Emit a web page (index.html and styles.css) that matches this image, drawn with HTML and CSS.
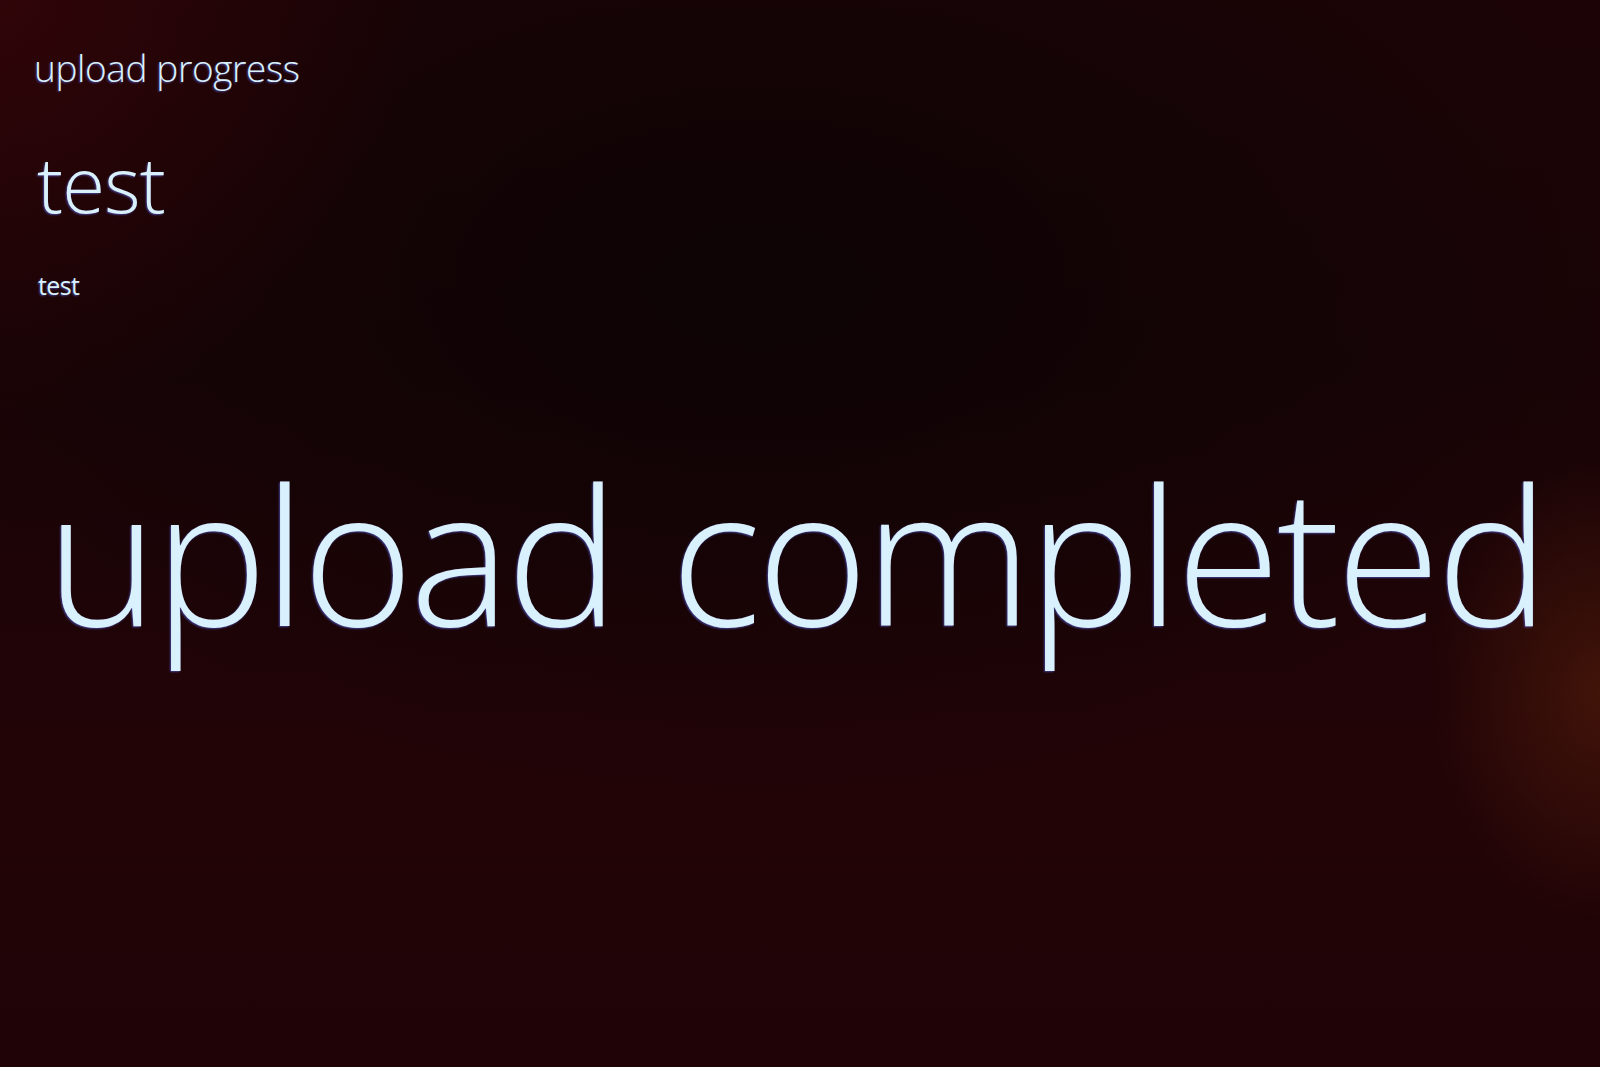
FILE: index.html
```html
<!DOCTYPE html>
<html lang="en">
<head>
<meta charset="utf-8">
<title>upload progress</title>
<link rel="stylesheet" href="styles.css">
</head>
<body>
<main class="screen">
  <header class="page-header">
    <p class="app-title">upload progress</p>
    <h1 class="page-title">test</h1>
    <p class="item-name">test</p>
  </header>
  <section class="status">
    <p class="status-text">upload completed</p>
  </section>
</main>
</body>
</html>
```
FILE: styles.css
```css
html, body {
  margin: 0;
  padding: 0;
  height: 100%;
}

body {
  font-family: "Open Sans", "Lato", sans-serif;
  color: #d8f1fc;
  background: #160406;
  overflow: hidden;
}

.screen {
  width: 1600px;
  height: 1067px;
  box-sizing: border-box;
  display: flex;
  flex-direction: column;
  background:
    radial-gradient(ellipse 170px 230px at 1600px 690px, rgba(82, 28, 10, 0.65), rgba(82, 28, 10, 0) 100%),
    radial-gradient(ellipse 420px 420px at 0px 0px, rgba(56, 5, 9, 0.7), rgba(56, 5, 9, 0) 100%),
    radial-gradient(ellipse 900px 520px at 760px 280px, rgba(12, 3, 4, 0.9), rgba(12, 3, 4, 0) 100%),
    linear-gradient(180deg, #1c0406 0%, #190406 35%, #220407 70%, #200306 100%);
}

.page-header {
  display: flex;
  flex-direction: column;
  padding: 42px 0 0 34px;
}

.app-title,
.page-title,
.item-name,
.status-text {
  margin: 0;
  text-shadow: -1px 1px 2px rgba(100, 110, 255, 0.55);
}

.app-title {
  font-size: 37px;
  font-weight: 300;
  line-height: 52px;
  letter-spacing: -0.4px;
}

.page-title {
  margin-top: 44px;
  padding-left: 3px;
  font-size: 78px;
  font-weight: 300;
  line-height: 90px;
  letter-spacing: -0.8px;
}

.item-name {
  margin-top: 40px;
  padding-left: 4px;
  font-size: 25px;
  font-weight: 500;
  line-height: 34px;
  letter-spacing: -0.6px;
}

.status {
  padding: 121px 0 0 46px;
}

.status-text {
  font-size: 190px;
  font-weight: 300;
  line-height: 260px;
  letter-spacing: -4px;
  word-spacing: 10px;
  white-space: nowrap;
}
```
